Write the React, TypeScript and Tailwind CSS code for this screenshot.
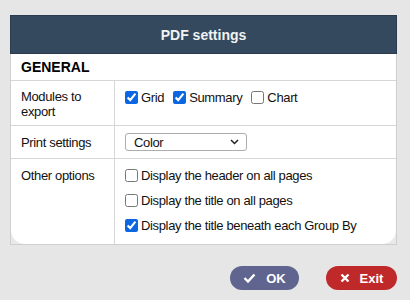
import React from "react";

function Check({ checked, label }: { checked?: boolean; label: string }) {
  return (
    <label className="flex items-center gap-[3px] leading-[15px]">
      <input type="checkbox" defaultChecked={checked} className="m-0 w-[13px] h-[13px] accent-[#0b66e4]" />
      <span>{label}</span>
    </label>
  );
}

export default function App() {
  return (
    <div className="w-[410px] h-[300px] bg-[#e6e6e6] pt-[15px] pl-[10px] pr-[13px] font-['Liberation_Sans',Arial,sans-serif] text-[13px] leading-[15px] tracking-[-0.35px] text-[#111]">
      <div className="border border-[#cfcfcf] bg-[#e9e9e9]">
        <div className="h-[39px] -mt-px -mx-px bg-[#34495e] border border-[#2b3b4c] flex items-center justify-center text-[#f2f2f2] font-bold text-[14px] tracking-normal pt-px">
          PDF settings
        </div>
        <div className="bg-white rounded-b-[14px]">
          <div className="h-[27px] flex items-center px-[10px] border-b border-[#d6d6d6] font-bold text-[14px] text-black tracking-normal">
            GENERAL
          </div>
          <div className="grid grid-cols-[104px_1fr]">
            <div className="border-r border-b border-[#d6d6d6] px-[10px] pt-[8px] h-[45px]">
              Modules to
              <br />
              export
            </div>
            <div className="border-b border-[#d6d6d6] pl-[10px] pt-[9px] flex items-start gap-[9px]">
              <Check checked label="Grid" />
              <Check checked label="Summary" />
              <Check label="Chart" />
            </div>
            <div className="border-r border-b border-[#d6d6d6] px-[10px] pt-[9px] h-[33px]">Print settings</div>
            <div className="border-b border-[#d6d6d6] pl-[10px] pt-[7px]">
              <div className="w-[122px] h-[18px] border border-[#adadad] rounded-[3px] flex items-center justify-between pl-[8px] pr-[7px]">
                <span>Color</span>
                <svg width="9" height="6" viewBox="0 0 9 6">
                  <path d="M1 1l3.5 3.5L8 1" fill="none" stroke="#222" strokeWidth="1.5" />
                </svg>
              </div>
            </div>
            <div className="border-r border-[#d6d6d6] px-[10px] pt-[9px] h-[85px]">Other options</div>
            <div className="pl-[10px] pt-[9px] flex flex-col gap-[10px]">
              <Check label="Display the header on all pages" />
              <Check label="Display the title on all pages" />
              <Check checked label="Display the title beneath each Group By" />
            </div>
          </div>
        </div>
      </div>
      <div className="flex justify-end gap-[27px] mt-[21px] tracking-normal">
        <button className="h-[24px] w-[69px] rounded-full bg-[#5f658f] text-white font-bold text-[13px] flex items-center justify-center gap-[10px]">
          <svg width="13" height="10" viewBox="0 0 13 10">
            <path d="M1.5 5l3.5 3.5L11.5 1.5" fill="none" stroke="white" strokeWidth="2.4" />
          </svg>
          OK
        </button>
        <button className="h-[24px] w-[71px] rounded-full bg-[#c0292a] text-white font-bold text-[13px] flex items-center justify-center gap-[10px]">
          <svg width="10" height="10" viewBox="0 0 10 10">
            <path d="M1.5 1.5l7 7M8.5 1.5l-7 7" fill="none" stroke="white" strokeWidth="2.4" />
          </svg>
          Exit
        </button>
      </div>
    </div>
  );
}
